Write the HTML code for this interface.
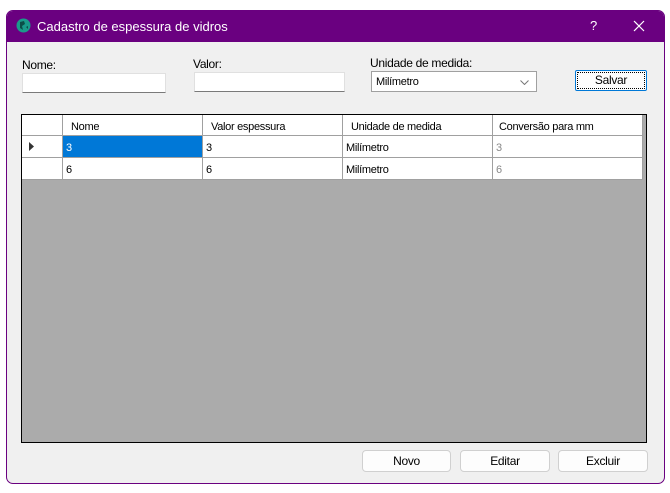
<!DOCTYPE html>
<html><head><style>
body{margin:0;width:670px;height:493px;background:#fff;font-family:"Liberation Sans",sans-serif;font-size:12px;position:relative;overflow:hidden;letter-spacing:-0.3px}
.a{position:absolute}
.win{left:6px;top:10px;width:657px;height:472px;border:1px solid #6a0080;border-radius:7px;background:#f0f0f0;overflow:hidden}
.tb{left:0;top:0;width:657px;height:31px;background:#6a0080;color:#fff;font-size:13px;letter-spacing:0}
.inp{background:#fff;border:1px solid #e0e0e0;border-bottom:1px solid #7a7a7a}
.btn{background:#fdfdfd;border:1px solid #d0d0d0;border-radius:4px;text-align:center;line-height:20px;font-size:12px}
.grid{left:21px;top:114px;width:624px;height:327px;border:1px solid #000;background:#ababab}
.c{position:absolute;background:#fff;border-right:1px solid #a0a0a0;border-bottom:1px solid #a0a0a0;box-sizing:border-box;padding-left:3px;padding-top:2px;line-height:20px;font-size:11px;letter-spacing:-0.3px}
</style></head><body>
<div class="a win">
 <div class="a tb">
  <svg class="a" style="left:9px;top:7px" width="15" height="15"><circle cx="7.5" cy="7.5" r="7" fill="#1a9a8a"/><path d="M4 4 L8 3 L9 6 L6 8 L7 12 L4 10Z M10 9 L12 8 L12 11Z" fill="#0b4d47"/></svg>
  <div class="a" style="left:30px;top:8px">Cadastro de espessura de vidros</div>
  <div class="a" style="left:583px;top:7px;font-size:13px">?</div>
  <svg class="a" style="left:626px;top:9px" width="12" height="12"><path d="M1 1L11 11M11 1L1 11" stroke="#fff" stroke-width="1.2"/></svg>
 </div>
</div>
<div class="a" style="left:22px;top:58px">Nome:</div>
<div class="a" style="left:193px;top:57px">Valor:</div>
<div class="a" style="left:370px;top:56px">Unidade de medida:</div>
<div class="a inp" style="left:22px;top:73px;width:142px;height:18px"></div>
<div class="a inp" style="left:194px;top:72px;width:149px;height:18px"></div>
<div class="a" style="left:371px;top:71px;background:#fff;border:1px solid #a0a0a0;font-size:11px;line-height:21px;padding-left:4px;box-sizing:border-box;width:166px;height:21px">Milímetro<svg class="a" style="right:7px;top:8px" width="9" height="5"><path d="M0.5 0.5L4.5 4.5L8.5 0.5" stroke="#777" fill="none"/></svg></div>
<div class="a btn" style="left:575px;top:70px;width:70px;height:19px;border:1px solid #0078d7;border-radius:2px;line-height:18px;outline:1px dotted #000;outline-offset:-3px">Salvar</div>
<div class="a grid">
 <div class="c" style="left:0;top:0;width:41px;height:21px"></div>
 <div class="c" style="left:41px;top:0;width:140px;height:21px;padding-left:8px">Nome</div>
 <div class="c" style="left:181px;top:0;width:140px;height:21px;padding-left:8px">Valor espessura</div>
 <div class="c" style="left:321px;top:0;width:150px;height:21px;padding-left:8px">Unidade de medida</div>
 <div class="c" style="left:471px;top:0;width:150px;height:21px;padding-left:6px">Conversão para mm</div>
 <div class="c" style="left:0;top:21px;width:41px;height:22px"><svg style="margin-left:4px" width="6" height="9"><path d="M0 0L5 4.5L0 9Z" fill="#333"/></svg></div>
 <div class="c" style="left:41px;top:21px;width:140px;height:22px;background:#0078d7;color:#fff">3</div>
 <div class="c" style="left:181px;top:21px;width:140px;height:22px">3</div>
 <div class="c" style="left:321px;top:21px;width:150px;height:22px">Milímetro</div>
 <div class="c" style="left:471px;top:21px;width:150px;height:22px;color:#888">3</div>
 <div class="c" style="left:0;top:43px;width:41px;height:22px"></div>
 <div class="c" style="left:41px;top:43px;width:140px;height:22px">6</div>
 <div class="c" style="left:181px;top:43px;width:140px;height:22px">6</div>
 <div class="c" style="left:321px;top:43px;width:150px;height:22px">Milímetro</div>
 <div class="c" style="left:471px;top:43px;width:150px;height:22px;color:#888">6</div>
</div>
<div class="a btn" style="left:362px;top:450px;width:87px;height:20px">Novo</div>
<div class="a btn" style="left:460px;top:450px;width:88px;height:20px">Editar</div>
<div class="a btn" style="left:558px;top:450px;width:88px;height:20px">Excluir</div>
</body></html>
